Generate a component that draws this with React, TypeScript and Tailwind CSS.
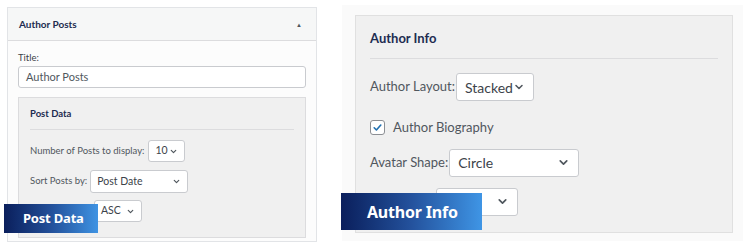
import React from 'react';

const Chevron = ({ size = 10 }: { size?: number }) => (
  <svg width={size} height={size} viewBox="0 0 20 20" fill="none" stroke="#50575e" strokeWidth="2.6" strokeLinecap="round" strokeLinejoin="round">
    <path d="M5 7.5l5 5 5-5" />
  </svg>
);

function FakeSelect({ value, className, text, chev }: { value: string; className: string; text: string; chev: number }) {
  return (
    <div className={`flex items-center justify-between bg-white border border-[#c9cbcf] rounded-[3px] ${className}`}>
      <span className={`${text} text-[#3c434a]`}>{value}</span>
      <Chevron size={chev} />
    </div>
  );
}

function LeftPanel() {
  return (
    <div className="relative ml-[7px] mt-[7px] w-[310px] h-[235px] border border-[#e2e4e7] bg-[#fcfcfc]">
      <div className="h-[33px] bg-[#f6f7f7] border-b border-[#dcdcde] flex items-center justify-between px-[11px]">
        <span className="text-[10px] font-bold text-[#1d2c50]">Author Posts</span>
        <span className="text-[6px] text-[#50575e] mr-[3px]">▲</span>
      </div>
      <div className="px-[10px] pt-[11px]">
        <div className="text-[9.5px] text-[#3c434a] leading-[12px]">Title:</div>
        <div className="mt-[2px] h-[22px] bg-white border border-[#c9cbcf] rounded-[3px] flex items-center px-[7px] text-[11px] text-[#50575e]">
          Author Posts
        </div>
        <div className="mt-[9px] h-[141px] bg-[#f0f0f0] border border-[#dcdcde] px-[11px]">
          <div className="pt-[9px] text-[9.5px] font-bold text-[#1d2c50] leading-[14px]">Post Data</div>
          <div className="mt-[8px] border-t border-[#dcdcde]" />
          <div className="mt-[10px] flex items-center gap-[4px]">
            <span className="text-[9.5px] text-[#50575e]">Number of Posts to display:</span>
            <FakeSelect value="10" className="w-[37px] h-[22px] px-[6px]" text="text-[10.5px]" chev={9} />
          </div>
          <div className="mt-[8px] flex items-center gap-[3px]">
            <span className="text-[9.5px] text-[#50575e]">Sort Posts by:</span>
            <FakeSelect value="Post Date" className="w-[98px] h-[23px] px-[6px]" text="text-[10.5px]" chev={9} />
          </div>
          <div className="mt-[7px] flex items-center">
            <div className="w-[64px]" />
            <FakeSelect value="ASC" className="w-[48px] h-[22px] px-[6px]" text="text-[10.5px]" chev={9} />
          </div>
        </div>
      </div>
      <div className="absolute left-[-4px] top-[196px] w-[94px] h-[29px] bg-gradient-to-r from-[#0b1f5c] via-[#23509a] to-[#3f93e3] flex items-center pl-[19px]">
        <span className="text-[13px] font-bold text-white tracking-[-0.2px]" style={{ fontFamily: '"Noto Sans", sans-serif' }}>Post Data</span>
      </div>
    </div>
  );
}

function RightPanel() {
  return (
    <div className="relative ml-[25px] mt-[5px] w-[401px] h-[236px] bg-[#fafafa] pl-[13px] pt-[10px]">
      <div className="w-[378px] h-[218px] bg-[#f0f0f0] border border-[#e0e0e0] px-[14px]">
        <div className="pt-[13px] text-[13px] font-bold text-[#1d2c50] leading-[18px]">Author Info</div>
        <div className="mt-[11px] border-t border-[#dcdcde] w-[348px]" />
        <div className="mt-[14px] flex items-center gap-[1px]">
          <span className="text-[13px] text-[#50575e]">Author Layout:</span>
          <FakeSelect value="Stacked" className="w-[78px] h-[28px] px-[8px]" text="text-[14px]" chev={12} />
        </div>
        <div className="mt-[17px] flex items-center gap-[8px]">
          <div className="w-[15px] h-[15px] bg-white border border-[#8c8f94] rounded-[3px] flex items-center justify-center">
            <svg width="11" height="11" viewBox="0 0 20 20" fill="none" stroke="#2271b1" strokeWidth="3" strokeLinecap="round" strokeLinejoin="round">
              <path d="M4 10.5l4 4 8-9" />
            </svg>
          </div>
          <span className="text-[13px] text-[#50575e]">Author Biography</span>
        </div>
        <div className="mt-[11px] flex items-center gap-[1px]">
          <span className="text-[13px] text-[#50575e]">Avatar Shape:</span>
          <FakeSelect value="Circle" className="w-[130px] h-[28px] px-[8px]" text="text-[14px]" chev={13} />
        </div>
        <div className="mt-[11px] flex items-center">
          <div className="w-[66px]" />
          <FakeSelect value="" className="w-[82px] h-[28px] px-[8px]" text="text-[14px]" chev={13} />
        </div>
      </div>
      <div className="absolute left-[-1px] top-[188px] w-[141px] h-[37px] bg-gradient-to-r from-[#0b1f5c] via-[#24529d] to-[#3f95e5] flex items-center pl-[26px]">
        <span className="text-[16px] font-bold text-white tracking-[-0.2px]" style={{ fontFamily: '"Noto Sans", sans-serif' }}>Author Info</span>
      </div>
    </div>
  );
}

export default function App() {
  return (
    <div className="w-[751px] h-[249px] bg-white flex overflow-hidden" style={{ fontFamily: 'Lato, "Noto Sans", sans-serif' }}>
      <LeftPanel />
      <RightPanel />
    </div>
  );
}
